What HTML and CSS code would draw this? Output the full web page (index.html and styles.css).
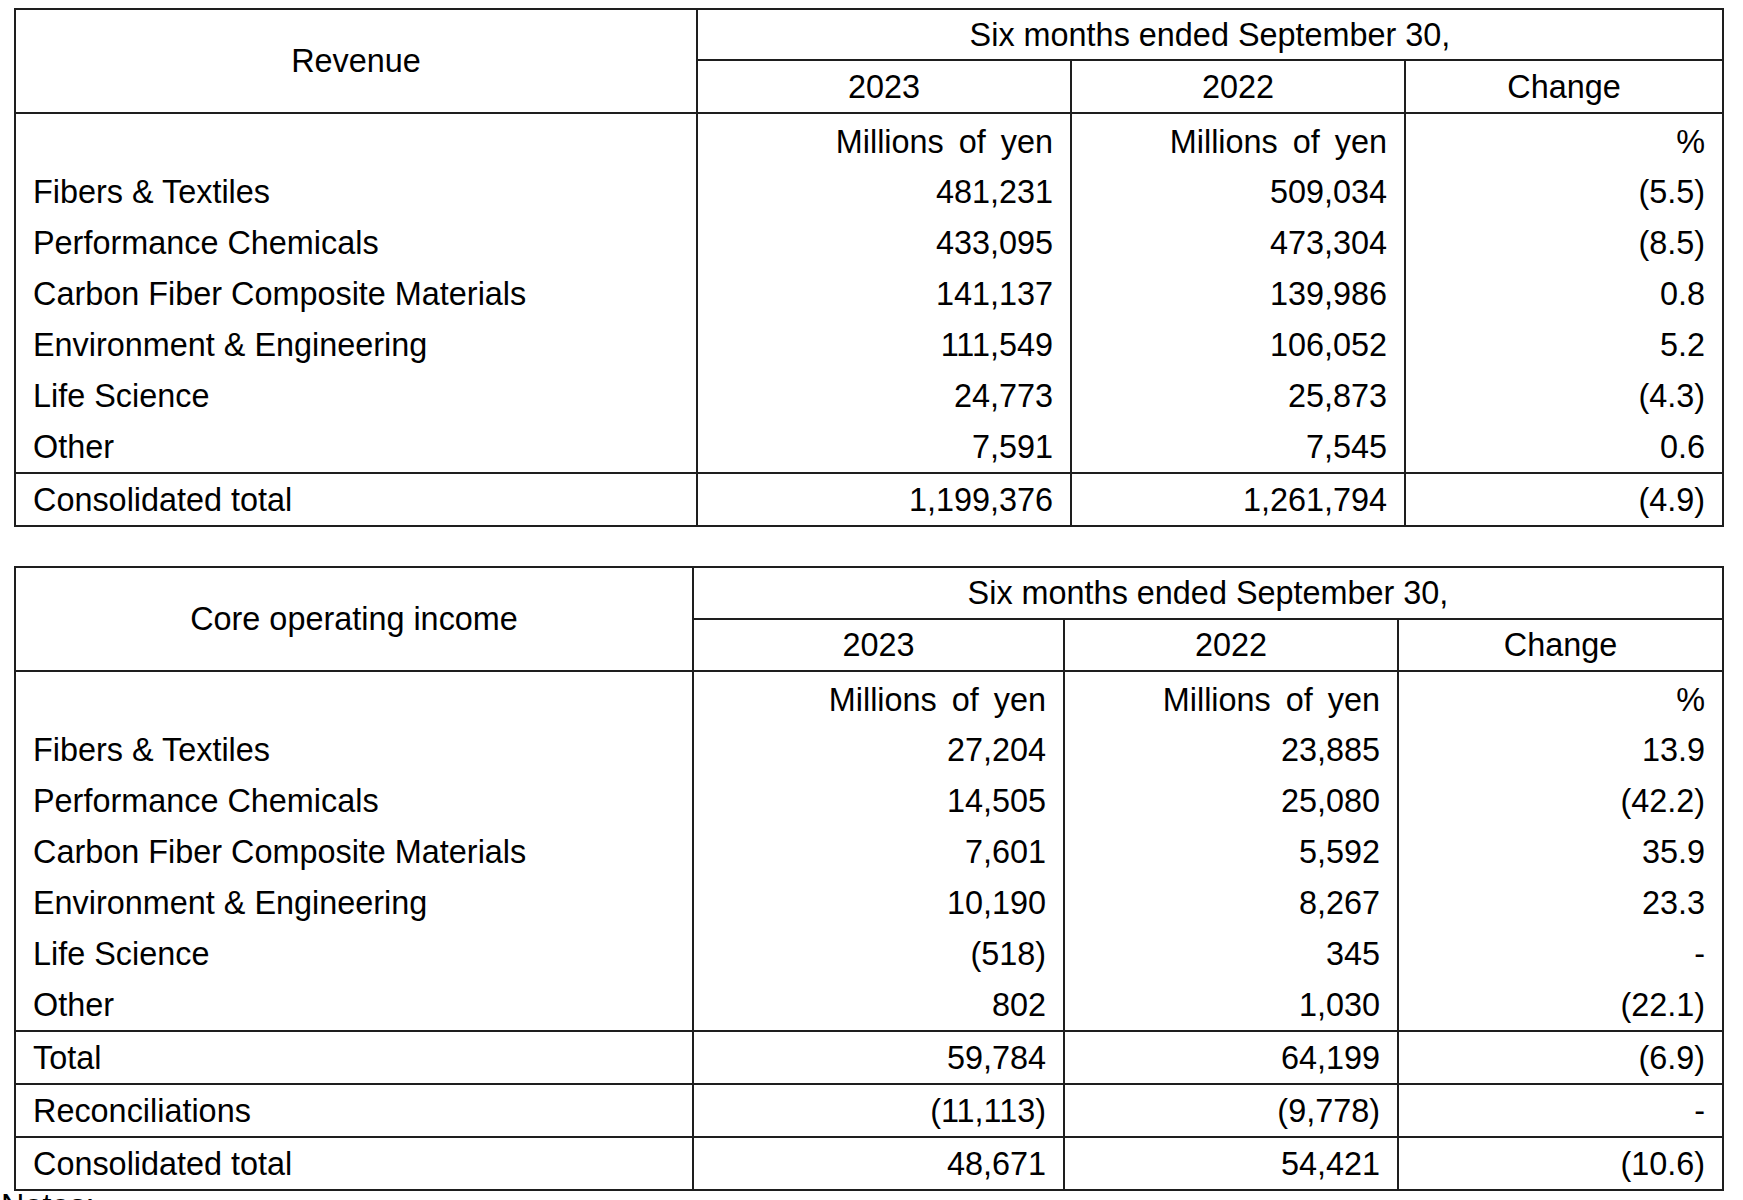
FILE: index.html
```html
<!DOCTYPE html>
<html lang="en">
<head>
<meta charset="utf-8">
<title>Segment results</title>
<link rel="stylesheet" href="styles.css">
</head>
<body>
<div class="page">
  <table class="fin fin-rev">
    <colgroup>
      <col class="c-label"><col class="c-a"><col class="c-b"><col class="c-c">
    </colgroup>
    <tr class="h1">
      <th rowspan="2" class="title">Revenue</th>
      <th colspan="3">Six months ended September 30,</th>
    </tr>
    <tr class="h2">
      <th>2023</th><th>2022</th><th>Change</th>
    </tr>
    <tr class="units">
      <td></td><td class="num"><span class="spaced">Millions of yen</span></td><td class="num"><span class="spaced">Millions of yen</span></td><td class="num">%</td>
    </tr>
    <tr class="row"><td class="lbl">Fibers &amp; Textiles</td><td class="num">481,231</td><td class="num">509,034</td><td class="num">(5.5)</td></tr>
    <tr class="row"><td class="lbl">Performance Chemicals</td><td class="num">433,095</td><td class="num">473,304</td><td class="num">(8.5)</td></tr>
    <tr class="row"><td class="lbl">Carbon Fiber Composite Materials</td><td class="num">141,137</td><td class="num">139,986</td><td class="num">0.8</td></tr>
    <tr class="row"><td class="lbl">Environment &amp; Engineering</td><td class="num">111,549</td><td class="num">106,052</td><td class="num">5.2</td></tr>
    <tr class="row"><td class="lbl">Life Science</td><td class="num">24,773</td><td class="num">25,873</td><td class="num">(4.3)</td></tr>
    <tr class="row last"><td class="lbl">Other</td><td class="num">7,591</td><td class="num">7,545</td><td class="num">0.6</td></tr>
    <tr class="sum"><td class="lbl">Consolidated total</td><td class="num">1,199,376</td><td class="num">1,261,794</td><td class="num">(4.9)</td></tr>
  </table>

  <table class="fin fin-core">
    <colgroup>
      <col class="c-label"><col class="c-a"><col class="c-b"><col class="c-c">
    </colgroup>
    <tr class="h1">
      <th rowspan="2" class="title">Core operating income</th>
      <th colspan="3">Six months ended September 30,</th>
    </tr>
    <tr class="h2">
      <th>2023</th><th>2022</th><th>Change</th>
    </tr>
    <tr class="units">
      <td></td><td class="num"><span class="spaced">Millions of yen</span></td><td class="num"><span class="spaced">Millions of yen</span></td><td class="num">%</td>
    </tr>
    <tr class="row"><td class="lbl">Fibers &amp; Textiles</td><td class="num">27,204</td><td class="num">23,885</td><td class="num">13.9</td></tr>
    <tr class="row"><td class="lbl">Performance Chemicals</td><td class="num">14,505</td><td class="num">25,080</td><td class="num">(42.2)</td></tr>
    <tr class="row"><td class="lbl">Carbon Fiber Composite Materials</td><td class="num">7,601</td><td class="num">5,592</td><td class="num">35.9</td></tr>
    <tr class="row"><td class="lbl">Environment &amp; Engineering</td><td class="num">10,190</td><td class="num">8,267</td><td class="num">23.3</td></tr>
    <tr class="row"><td class="lbl">Life Science</td><td class="num">(518)</td><td class="num">345</td><td class="num">-</td></tr>
    <tr class="row last"><td class="lbl">Other</td><td class="num">802</td><td class="num">1,030</td><td class="num">(22.1)</td></tr>
    <tr class="sum"><td class="lbl">Total</td><td class="num">59,784</td><td class="num">64,199</td><td class="num">(6.9)</td></tr>
    <tr class="sum"><td class="lbl">Reconciliations</td><td class="num">(11,113)</td><td class="num">(9,778)</td><td class="num">-</td></tr>
    <tr class="sum"><td class="lbl">Consolidated total</td><td class="num">48,671</td><td class="num">54,421</td><td class="num">(10.6)</td></tr>
  </table>

  <div class="notes">Notes:</div>
</div>
</body>
</html>
```

FILE: styles.css
```css
html, body {
  margin: 0;
  padding: 0;
  background: #ffffff;
}

body {
  font-family: "Liberation Sans", Arial, sans-serif;
  font-size: 32.4px;
  color: #000000;
}

.page {
  padding: 8px 0 0 0;
}

.fin {
  border-collapse: collapse;
  table-layout: fixed;
  width: 1710px;
  margin-left: 14px;
  border: 2px solid #1e1e1e;
}

.fin + .fin {
  margin-top: 39px;
}

.fin-rev .c-label { width: 682px; }
.fin-rev .c-a { width: 374px; }
.fin-rev .c-b { width: 334px; }
.fin-rev .c-c { width: 318px; }

.fin-core .c-label { width: 678px; }
.fin-core .c-a { width: 371px; }
.fin-core .c-b { width: 334px; }
.fin-core .c-c { width: 325px; }

.fin th,
.fin td {
  padding: 0;
  border-left: 2px solid #1e1e1e;
  border-right: 2px solid #1e1e1e;
  white-space: nowrap;
  vertical-align: middle;
  line-height: 36px;
}

.fin th {
  font-weight: normal;
  text-align: center;
  border-top: 2px solid #1e1e1e;
  border-bottom: 2px solid #1e1e1e;
}

.fin .h1 { height: 51px; }
.fin .h2 { height: 53px; }
.fin-core .h1 { height: 52px; }
.fin-core .h2 { height: 52px; }

.fin .units { height: 54px; }
.fin .units td { padding-top: 3px; }

.fin .row { height: 51px; }
.fin .row td { padding-bottom: 1px; }

.fin .sum { height: 53px; }
.fin .sum td {
  border-top: 2px solid #1e1e1e;
  border-bottom: 2px solid #1e1e1e;
}

.fin .lbl {
  padding-left: 17px;
  text-align: left;
}

.fin .num {
  padding-right: 17px;
  text-align: right;
}

.spaced {
  word-spacing: 6px;
}

.notes {
  margin-top: 0;
  padding-left: 1px;
  line-height: 30px;
}
```
